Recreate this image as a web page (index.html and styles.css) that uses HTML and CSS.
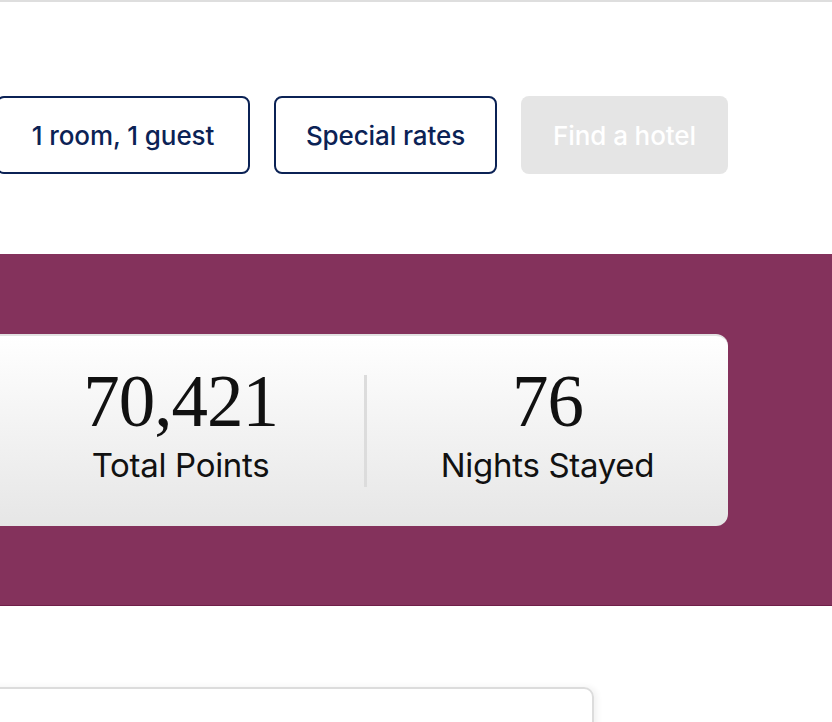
FILE: index.html
```
<!DOCTYPE html>
<html>
<head>
<meta charset="utf-8">
<link rel="stylesheet" href="styles.css">
</head>
<body>
<div class="topline"></div>
<div class="search">
  <button class="btn btn-outline btn-guests">1 room, 1 guest</button>
  <button class="btn btn-outline btn-rates">Special rates</button>
  <button class="btn btn-disabled btn-find">Find a hotel</button>
</div>
<section class="band">
  <div class="stats">
    <div class="stat stat-points">
      <div class="stat-num">70,421</div>
      <div class="stat-label">Total Points</div>
    </div>
    <div class="divider"></div>
    <div class="stat stat-nights">
      <div class="stat-num">76</div>
      <div class="stat-label">Nights Stayed</div>
    </div>
  </div>
</section>
<div class="lower">
  <div class="panel"></div>
</div>
</body>
</html>
```
FILE: styles.css
```
* { box-sizing: border-box; }
html, body { margin: 0; padding: 0; background: #fff; overflow: hidden; }
body { font-family: Inter, "Noto Sans", sans-serif; width: 832px; height: 722px; }
.topline { height: 2px; background: #dedede; }
.search {
  display: flex;
  justify-content: flex-end;
  gap: 24px;
  padding: 94px 104px 0 0;
  height: 252px;
}
.btn {
  height: 78px;
  border-radius: 8px;
  font-family: Inter, sans-serif;
  font-size: 26px;
  font-weight: 500;
  letter-spacing: -0.1px;
  display: flex;
  align-items: center;
  justify-content: center;
  padding: 0;
  flex: none;
}
.btn-outline { background: #fff; border: 2px solid #0b2255; color: #0b2255; }
.btn-guests { width: 254px; margin-left: -4px; }
.btn-rates { width: 223px; }
.btn-find { width: 207px; background: #e5e5e5; border: none; color: #fff; }
.band {
  background: #84325c;
  height: 352px;
  padding-top: 80px;
  display: flex;
  justify-content: flex-end;
  padding-right: 104px;
  border-bottom: 1px solid #6f1f48;
}
.stats {
  width: 747px;
  margin-left: -20px;
  height: 192px;
  border-radius: 12px;
  background: linear-gradient(#ffffff, #e6e6e6);
  border-top: 2px solid #e2e2e2;
  display: flex;
  align-items: center;
  padding-left: 16px;
}
.stat {
  display: flex;
  flex-direction: column;
  align-items: center;
}
.stat-points { width: 367px; flex: none; }
.stat-nights { flex: 1; }
.stat-num {
  font-family: "Liberation Serif", serif;
  font-size: 73px;
  line-height: 76px;
  color: #111;
  letter-spacing: -1px;
  margin-top: -14px;
}
.stat-label {
  font-family: Inter, sans-serif;
  font-size: 33px;
  line-height: 38px;
  color: #111;
  margin-top: 6px;
  letter-spacing: -0.3px;
}
.divider { width: 3px; height: 112px; background: #dcdcdc; flex: none; }
.lower { padding-top: 81px; }
.panel {
  width: 614px;
  margin-left: -20px;
  height: 80px;
  border: 2px solid #dcdcdc;
  border-radius: 10px;
  box-shadow: 3px 0 6px rgba(0,0,0,0.06);
}
```
